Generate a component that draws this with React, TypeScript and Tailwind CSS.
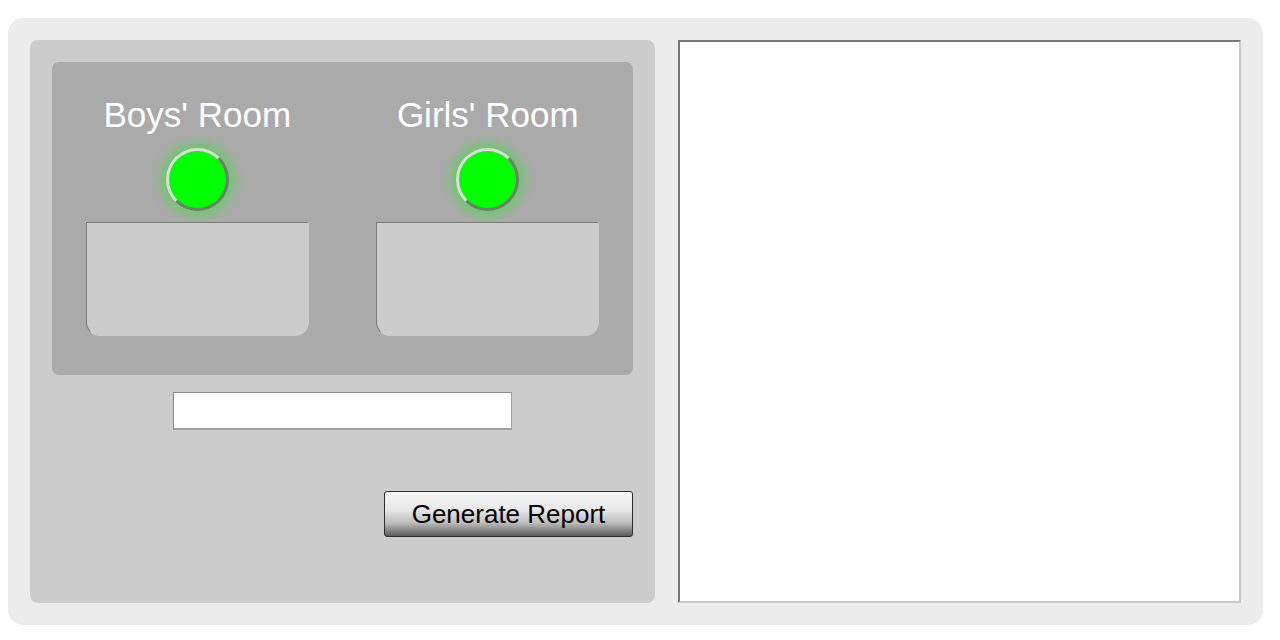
import React from "react";

// Two-room status panel with a report area on the right
const rooms = ["Boys' Room", "Girls' Room"];

function Room({ name }: { name: string }) {
  return (
    <div className="flex flex-col items-center">
      <div className="text-[35px] leading-[40px] text-white">{name}</div>
      {/* status light */}
      <div className="mt-[13px] h-[63px] w-[63px] rounded-full border-[3px] border-t-[#dcdcdc] border-l-[#dcdcdc] border-b-[#777] border-r-[#777] bg-[#00ff00] shadow-[0_0_12px_4px_rgba(0,255,0,0.45)]" />
      <div className="mt-[11px] h-[114px] w-[223px] rounded-b-[14px] border border-t-[#7a7a7a] border-l-[#7a7a7a] border-b-[#cccccc] border-r-[#cccccc] bg-[#cccccc]" />
    </div>
  );
}

export default function App() {
  return (
    <div className="min-h-[640px] bg-white pt-[18px] pl-[8px] font-['Liberation_Sans',Arial,sans-serif]">
      <div className="flex w-[1255px] gap-[23px] rounded-[15px] bg-[#ececec] p-[22px]">
        {/* Left: controls */}
        <div className="flex h-[563px] w-[625px] flex-col rounded-[8px] bg-[#cccccc] p-[22px]">
          <div className="grid grid-cols-2 rounded-[7px] bg-[#aaaaaa] pt-[33px] pb-[39px]">
            {rooms.map((r) => (
              <Room key={r} name={r} />
            ))}
          </div>
          <div className="mt-[17px] flex justify-center">
            <input
              type="text"
              className="h-[38px] w-[339px] border border-b-2 border-t-[#8a8a8a] border-l-[#8a8a8a] border-b-[#a0a0a0] border-r-[#a0a0a0] bg-white outline-none"
            />
          </div>
          <div className="mt-[61px] flex justify-end">
            <button className="h-[46px] w-[249px] rounded-[3px] border border-[#2e2e2e] bg-[linear-gradient(to_bottom,#f6f6f6_0%,#e8e8e8_40%,#bdbdbd_70%,#5a5a5a_100%)] text-[26px] leading-none text-black">
              Generate Report
            </button>
          </div>
        </div>

        {/* Right: report output */}
        <div className="h-[563px] w-[563px] border-2 border-t-[#777] border-l-[#777] border-b-[#c8c8c8] border-r-[#c8c8c8] bg-white" />
      </div>
    </div>
  );
}
